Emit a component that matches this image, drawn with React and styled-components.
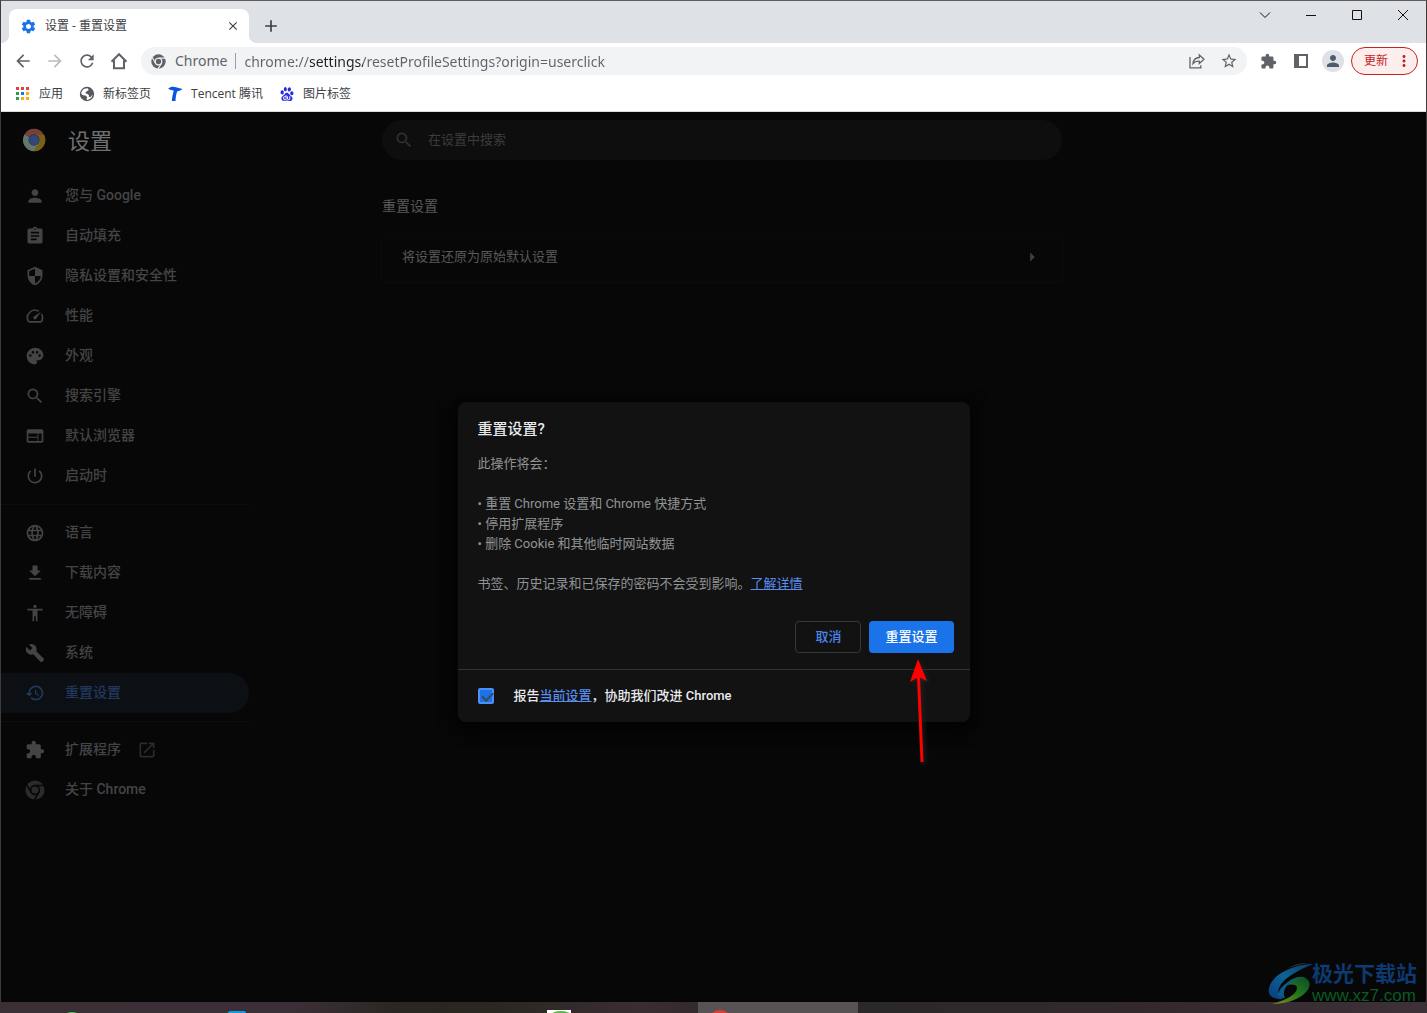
import React, { useState } from 'react'
import styled, { createGlobalStyle, css } from 'styled-components'
import {
  MdPerson, MdAssignment, MdSecurity, MdSpeed, MdPalette, MdSearch, MdWeb,
  MdPowerSettingsNew, MdLanguage, MdFileDownload, MdAccessibility, MdBuild,
  MdRestore, MdExtension, MdLaunch, MdSettings, MdClose, MdAdd, MdArrowBack,
  MdArrowForward, MdRefresh, MdStarBorder, MdMoreVert, MdArrowRight,
} from 'react-icons/md'
import { SiBaidu } from 'react-icons/si'

const uiFont = '"Open Sans", "Noto Sans CJK SC", sans-serif'
const pageFont = 'Roboto, "Noto Sans CJK SC", sans-serif'

const ChromeMark = ({ size = 16, gap = '#f1f3f4' }) => (
  <svg width={size} height={size} viewBox="0 0 24 24" aria-hidden="true">
    <circle cx="12" cy="12" r="11.5" fill="currentColor" />
    <circle cx="12" cy="12" r="6.2" fill={gap} />
    <circle cx="12" cy="12" r="4.3" fill="currentColor" />
    <path d="M12 6.6h11M7.3 14.7 1.8 5.2M16.7 14.7l-5.5 9.4" stroke={gap} strokeWidth="1.8" fill="none" />
  </svg>
)

const ChromeLogo = () => (
  <svg width="24" height="24" viewBox="0 0 24 24" aria-hidden="true">
    <path d="M12 12 2.4 6.4A11.2 11.2 0 0 1 21.8 6.4z" fill="#76403b" />
    <path d="M12 12 21.8 6.4A11.2 11.2 0 0 1 12 23.2z" fill="#796018" />
    <path d="M12 12v11.2A11.2 11.2 0 0 1 2.4 6.4z" fill="#62786a" />
    <path d="M7.4 14.8 2.4 6.4l5.3 3zM16.4 15l-4.4 8.2-2-6z" fill="#62786a" />
    <path d="M12 6.8h10A11.2 11.2 0 0 1 12 23.2l4.5-8.4z" fill="#796018" />
    <circle cx="12" cy="12" r="5.4" fill="#0a0a0a" />
    <circle cx="12" cy="12" r="5.2" fill="#304878" />
  </svg>
)

const HomeIcon = () => (
  <svg width="18" height="18" viewBox="0 0 18 18" fill="none" stroke="currentColor" strokeWidth="2" aria-hidden="true">
    <path d="M1.5 9.8 9 2.2l7.5 7.6M4 8.2v8h10v-8" />
  </svg>
)

const ShareIcon = () => (
  <svg width="16" height="16" viewBox="0 0 16 16" fill="none" stroke="currentColor" strokeWidth="1.3" aria-hidden="true">
    <path d="M1 4v10.8h10.8v-2.6M4 10.5c.5-4 2.8-5.8 6.3-6V2L15 6.3l-4.7 4.2V8.2C7.5 8 5.7 8.6 4 10.5z" />
  </svg>
)

const PanelIcon = () => (
  <svg width="14" height="14" viewBox="0 0 14 14" aria-hidden="true">
    <path fill="currentColor" fillRule="evenodd" d="M0 0h14v14H0zM5 2v10h7V2z" />
  </svg>
)

const AppsIcon = () => (
  <svg width="16" height="16" viewBox="0 0 16 16" aria-hidden="true">
    <path fill="#ea3f34" d="M1 1h3v3H1zM6 1h3v3H6zM11 1h3v3h-3z" />
    <path fill="#279c52" d="M1 6h3v3H1zM1 11h3v3H1z" />
    <path fill="#1a73e8" d="M6 6h3v3H6z" />
    <path fill="#fbae09" d="M11 6h3v3h-3zM11 11h3v3h-3zM6 11h3v3H6z" />
  </svg>
)

const GlobeIcon = () => (
  <svg width="16" height="16" viewBox="0 0 16 16" aria-hidden="true">
    <circle cx="8" cy="8" r="7.2" fill="#55585c" />
    <path fill="#fff" d="M2.2 7.8C2.4 5.4 3.6 3.6 5.400 2.800L9 2.200 9.600 4.200 7.400 5.600 6.200 7.300 8.600 7.900 10 9.300 9.600 10.600 11.400 11.200 13.600 8.600C13.400 11.600 11 13.800 8.200 13.900L7.400 12.700 8.400 11.200 6.400 9.600 4 9.200z" />
  </svg>
)

const TencentIcon = () => (
  <svg width="16" height="16" viewBox="0 0 16 16" aria-hidden="true">
    <path fill="#0a55e0" d="M1.200 2.800C3.500.6 6.300.400 9 1.300l6.500 1.800c-1.300 1.300-3 2-5.200 2.100-1.100 2.600-1.600 5.600-1.800 9.800H4.900c.2-4 .9-7.300 1.900-10.200-2-.7-3.800-.9-5.600-2z" />
  </svg>
)

const SwirlLogo = () => (
  <svg width="46" height="42" viewBox="0 0 46 42" aria-hidden="true">
    <defs>
      <linearGradient id="swirlBlue" x1="1" y1="0" x2="0" y2="1">
        <stop offset="0" stopColor="#0b3f66" />
        <stop offset=".5" stopColor="#0e6296" />
        <stop offset="1" stopColor="#0b3b7a" />
      </linearGradient>
      <linearGradient id="swirlGreen" x1="1" y1="0" x2="0" y2="1">
        <stop offset="0" stopColor="#0b4a26" />
        <stop offset=".5" stopColor="#257a1d" />
        <stop offset="1" stopColor="#8a8420" />
      </linearGradient>
    </defs>
    <path fill="url(#swirlBlue)" d="M45 1C30 1 5 9 1 25c-2 8 5 12 14 11-6-4-6-10-1-16C21 12 33 6 45 1z" />
    <path fill="url(#swirlGreen)" d="M36 14c8 4 7 11 0 17-8 7-21 10-32 10 14-4 26-10 25-17-1-3-6-3-12-2 5-6 12-9 19-8z" />
    <path fill="#0c5a8c" d="M10 31c3-9 12-15 25-17-8 3-14 6-17 10-2 3-3 7-1 11-4 0-7-1-7-4z" />
    <path fill="#3c302a" d="M20 5C27 1 34 0 40 0 33 1 27 3 20 5z" />
  </svg>
)

const navGroups = [
  [
    { label: '您与 Google', Icon: MdPerson },
    { label: '自动填充', Icon: MdAssignment },
    { label: '隐私设置和安全性', Icon: MdSecurity },
    { label: '性能', Icon: MdSpeed },
    { label: '外观', Icon: MdPalette },
    { label: '搜索引擎', Icon: MdSearch },
    { label: '默认浏览器', Icon: MdWeb },
    { label: '启动时', Icon: MdPowerSettingsNew },
  ],
  [
    { label: '语言', Icon: MdLanguage },
    { label: '下载内容', Icon: MdFileDownload },
    { label: '无障碍', Icon: MdAccessibility },
    { label: '系统', Icon: MdBuild },
    { label: '重置设置', Icon: MdRestore, active: true },
  ],
  [
    { label: '扩展程序', Icon: MdExtension, external: true },
    { label: '关于 Chrome', Icon: () => <ChromeMark size={20} gap="#070707" />, dim: true },
  ],
]

const App = () => {
  const [url, setUrl] = useState('chrome://settings/resetProfileSettings?origin=userclick')
  const [search, setSearch] = useState('')
  const [report, setReport] = useState(true)

  return (
    <>
      <GlobalStyle />
      <Desktop>
        <Window>
          <TabStrip>
            <Tab>
              <MdSettings size={17} color="#1a73e8" />
              <TabTitle>设置 - 重置设置</TabTitle>
              <TabButton aria-label="关闭标签页"><MdClose size={14} /></TabButton>
            </Tab>
            <NewTab aria-label="新标签页"><MdAdd size={20} /></NewTab>
            <WindowControls>
              <WindowButton aria-label="搜索标签页"><svg width="12" height="12" viewBox="0 0 12 12"><path d="M1 3.5 6 8.5l5-5" /></svg></WindowButton>
              <WindowButton aria-label="最小化"><svg width="12" height="12" viewBox="0 0 12 12"><path d="M1 6.5h10" /></svg></WindowButton>
              <WindowButton aria-label="最大化"><svg width="12" height="12" viewBox="0 0 12 12"><path d="M1.5 1.5h9v9h-9z" /></svg></WindowButton>
              <WindowButton aria-label="关闭"><svg width="12" height="12" viewBox="0 0 12 12"><path d="m1 1 10 10M11 1 1 11" /></svg></WindowButton>
            </WindowControls>
          </TabStrip>

          <Toolbar>
            <ToolButton aria-label="后退"><MdArrowBack size={20} /></ToolButton>
            <ToolButton aria-label="前进" $faded><MdArrowForward size={20} /></ToolButton>
            <ToolButton aria-label="重新加载"><MdRefresh size={20} /></ToolButton>
            <ToolButton aria-label="主页"><HomeIcon /></ToolButton>
            <Omnibox>
              <ChromeMark size={15} />
              <SiteName>Chrome</SiteName>
              <UrlInput aria-label="地址栏" value={url} onChange={(e) => setUrl(e.target.value)} />
              <ToolButton aria-label="分享"><ShareIcon /></ToolButton>
              <ToolButton aria-label="加入书签"><MdStarBorder size={18} /></ToolButton>
            </Omnibox>
            <ToolButton aria-label="扩展程序"><MdExtension size={17} /></ToolButton>
            <ToolButton aria-label="侧边栏"><PanelIcon /></ToolButton>
            <ToolButton aria-label="个人资料"><Avatar><MdPerson size={18} /></Avatar></ToolButton>
            <UpdateButton>更新<MdMoreVert size={18} /></UpdateButton>
          </Toolbar>

          <BookmarkBar>
            <Bookmark href="#apps"><AppsIcon />应用</Bookmark>
            <Bookmark href="#newtab"><GlobeIcon />新标签页</Bookmark>
            <Bookmark href="#tencent"><TencentIcon />Tencent 腾讯</Bookmark>
            <Bookmark href="#pictures"><SiBaidu size={14} color="#2a2ae0" />图片标签</Bookmark>
          </BookmarkBar>

          <Page>
            <Sidebar>
              <Brand>
                <ChromeLogo />
                <BrandTitle>设置</BrandTitle>
              </Brand>
              {navGroups.map((group, i) => (
                <NavGroup key={i}>
                  {group.map(({ label, Icon, active, external, dim }) => (
                    <NavLink key={label} href="#" $active={active} $dim={dim}>
                      <Icon size={20} />
                      <span>{label}</span>
                      {external && <MdLaunch className="external" size={20} />}
                    </NavLink>
                  ))}
                </NavGroup>
              ))}
            </Sidebar>

            <Main>
              <SearchField>
                <MdSearch size={20} />
                <input
                  type="text"
                  aria-label="在设置中搜索"
                  placeholder="在设置中搜索"
                  value={search}
                  onChange={(e) => setSearch(e.target.value)}
                />
              </SearchField>
              <SectionTitle>重置设置</SectionTitle>
              <CardRow>
                将设置还原为原始默认设置
                <MdArrowRight size={22} />
              </CardRow>
            </Main>

            <Backdrop>
              <Dialog role="dialog" aria-labelledby="reset-title">
                <DialogBody>
                  <DialogTitle id="reset-title">重置设置?</DialogTitle>
                  <p>此操作将会：</p>
                  <ul>
                    <li>重置 Chrome 设置和 Chrome 快捷方式</li>
                    <li>停用扩展程序</li>
                    <li>删除 Cookie 和其他临时网站数据</li>
                  </ul>
                  <p>书签、历史记录和已保存的密码不会受到影响。<Link href="#more">了解详情</Link></p>
                </DialogBody>
                <Actions>
                  <Button>取消</Button>
                  <Button $primary>重置设置</Button>
                </Actions>
                <DialogFooter>
                  <Checkbox id="report" type="checkbox" checked={report} onChange={(e) => setReport(e.target.checked)} />
                  <label htmlFor="report">报告<Link href="#current">当前设置</Link>，协助我们改进 Chrome</label>
                </DialogFooter>
                <Pointer viewBox="0 0 24 108" aria-hidden="true">
                  <path d="m12.500 18 3.500 85" stroke="#f00" strokeWidth="3" />
                  <path d="M12 0 4 23l8.500-5 8.500 4z" fill="#f00" />
                </Pointer>
              </Dialog>
            </Backdrop>
          </Page>
        </Window>

        <Taskbar>
          <TaskItem><svg width="24" height="3" viewBox="0 0 24 3"><ellipse cx="8" cy="5" rx="7" ry="3" fill="#45c552" /></svg></TaskItem>
          <TaskItem><svg width="24" height="3" viewBox="0 0 24 3"><rect x="3" y="1" width="18" height="9" rx="2" fill="#0b9ee6" /></svg></TaskItem>
          <TaskItem />
          <TaskItem><svg width="24" height="3" viewBox="0 0 24 3"><path fill="#fff" d="M0 0h24v3H0z" /><ellipse cx="14" cy="5" rx="10" ry="4" fill="#5bb848" /></svg></TaskItem>
          <TaskItem $active><svg width="24" height="3" viewBox="0 0 24 3"><circle cx="12" cy="12" r="12" fill="#e63b2e" /></svg></TaskItem>
        </Taskbar>

        <Watermark>
          <SwirlLogo />
          <div>
            <strong>极光下载站</strong>
            <span>www.xz7.com</span>
          </div>
        </Watermark>
      </Desktop>
    </>
  )
}

export default App

const GlobalStyle = createGlobalStyle`
  * {
    box-sizing: border-box;
  }

  body {
    margin: 0;
    background: #070707;
  }

  button, input {
    margin: 0;
    padding: 0;
    border: 0;
    background: none;
    font: inherit;
    color: inherit;
    outline: none;
  }

  h1, h2, p, ul {
    margin: 0;
    padding: 0;
    font-weight: 400;
  }

  svg {
    display: block;
    flex: none;
  }
`;

const Desktop = styled.div`
  position: relative;
  display: flex;
  flex-direction: column;
  min-height: 100vh;
  font: 12px/16px ${uiFont};
`;

const Window = styled.div`
  flex: 1;
  display: flex;
  flex-direction: column;
  border: 1px solid #43383b;
  border-top-color: #5f5b5e;
  border-bottom: 0;
`;

const TabStrip = styled.div`
  display: flex;
  height: 42px;
  padding: 8px 0 0 8px;
  background: #dee1e6;
`;

const Tab = styled.div`
  position: relative;
  display: flex;
  align-items: center;
  gap: 8px;
  width: 240px;
  padding: 0 9px 0 11px;
  border-radius: 8px 8px 0 0;
  background: #fff;
  color: #3c4043;

  &::before,
  &::after {
    content: '';
    position: absolute;
    bottom: 0;
    width: 8px;
    height: 8px;
  }

  &::before {
    left: -8px;
    background: radial-gradient(circle at 0 0, transparent 8px, #fff 8px);
  }

  &::after {
    right: -8px;
    background: radial-gradient(circle at 100% 0, transparent 8px, #fff 8px);
  }
`;

const TabTitle = styled.span`
  flex: 1;
`;

const TabButton = styled.button`
  display: grid;
  place-items: center;
  width: 14px;
  height: 16px;
`;

const NewTab = styled.button`
  display: grid;
  place-items: center;
  width: 28px;
  margin-left: 8px;
  color: #3c4043;
`;

const WindowControls = styled.div`
  display: flex;
  margin: -8px 0 0 auto;
`;

const WindowButton = styled.button`
  display: grid;
  place-items: center;
  width: 46px;
  height: 28px;

  svg {
    fill: none;
    stroke: #111;
  }
`;

const Toolbar = styled.div`
  display: flex;
  align-items: center;
  height: 36px;
  padding: 0 8px 0 6px;
  background: #fff;
`;

const ToolButton = styled.button`
  display: grid;
  place-items: center;
  flex: none;
  width: 32px;
  height: 28px;
  color: ${({ $faded }) => ($faded ? '#babcbe' : '#5f6368')};
`;

const Omnibox = styled.div`
  flex: 1;
  display: flex;
  align-items: center;
  height: 28px;
  margin: 0 6px;
  padding: 0 2px 0 10px;
  border-radius: 14px;
  background: #f1f3f4;
  color: #5f6368;
  font-family: "Noto Sans", "Noto Sans CJK SC", sans-serif;
  font-size: 14px;
`;

const SiteName = styled.span`
  margin-left: 9px;
  padding-right: 8px;
  border-right: 1px solid #9aa0a6;
`;

/* the host part of the address is darker than the rest */
const UrlInput = styled.input`
  flex: 1;
  min-width: 0;
  margin-left: 8px;
  height: 20px;
  background: linear-gradient(90deg, #5f6368 66px, #202124 66px 119px, #5f6368 119px);
  background-clip: text;
  -webkit-background-clip: text;
  -webkit-text-fill-color: transparent;
`;

const Avatar = styled.span`
  display: grid;
  place-items: center;
  width: 22px;
  height: 22px;
  border-radius: 50%;
  background: #dee1e6;
  color: #4e5a70;
`;

const UpdateButton = styled.button`
  display: flex;
  align-items: center;
  gap: 7px;
  height: 28px;
  margin-left: 2px;
  padding: 0 4px 0 12px;
  border: 1px solid #c5221f;
  border-radius: 14px;
  background: #fceeed;
  color: #c5221f;
`;

const BookmarkBar = styled.nav`
  display: flex;
  align-items: center;
  gap: 16px;
  height: 33px;
  padding: 0 14px 3px;
  border-bottom: 1px solid #dcdcdc;
  background: #fff;
`;

const Bookmark = styled.a`
  display: flex;
  align-items: center;
  gap: 8px;
  color: #3c4043;
  text-decoration: none;

  svg {
    width: 16px;
  }
`;

const Page = styled.div`
  position: relative;
  flex: 1;
  display: grid;
  grid-template-columns: minmax(266px, 381fr) minmax(0, 680px) minmax(0, 364fr);
  background: #070707;
  font: 13px/20px ${pageFont};
`;

const Sidebar = styled.nav`
  width: 248px;
`;

const Brand = styled.div`
  display: flex;
  align-items: center;
  gap: 22px;
  height: 56px;
  padding-left: 21px;
`;

const BrandTitle = styled.h1`
  padding-top: 4px;
  color: #6f7072;
  font-size: 22px;
  line-height: 32px;
`;

const NavGroup = styled.div`
  padding: 8px 0;

  & + & {
    border-top: 1px solid #0d0d0d;
  }
`;

const NavLink = styled.a`
  display: flex;
  align-items: center;
  gap: 20px;
  height: 40px;
  padding-left: 24px;
  border-radius: 0 20px 20px 0;
  color: #434446;
  font-size: 14px;
  font-weight: 500;
  text-decoration: none;

  span {
    padding-bottom: 2px;
  }

  .external {
    margin-left: -4px;
    color: #2a2b2c;
  }

  ${({ $dim }) => $dim && css`
    svg {
      color: #2a2b2c;
    }
  `}

  ${({ $active }) => $active && css`
    background: #0c1014;
    color: #22385c;
  `}
`;

const Main = styled.main`
  padding-top: 8px;
`;

const SearchField = styled.div`
  display: flex;
  align-items: center;
  gap: 14px;
  height: 40px;
  padding: 0 12px;
  border-radius: 20px;
  background: #0e0e0e;
  color: #303132;

  input {
    flex: 1;
  }

  input::placeholder {
    color: #3b3c3e;
  }
`;

const SectionTitle = styled.h2`
  margin: 36px 0 17px;
  color: #58595b;
  font-size: 14px;
`;

const CardRow = styled.button`
  display: flex;
  align-items: center;
  justify-content: space-between;
  width: 100%;
  height: 48px;
  padding: 0 19px 0 20px;
  border-radius: 4px;
  box-shadow: 0 1px 3px 1px #0c0c0c;
  color: #58595b;

  svg {
    color: #3f4042;
  }
`;

const Backdrop = styled.div`
  position: absolute;
  inset: 0;
  display: grid;
  place-items: center;
  padding-top: 10px;
`;

const Dialog = styled.section`
  position: relative;
  width: 512px;
  border-radius: 8px;
  background: #121212;
  box-shadow: 0 4px 16px 4px #030303;
`;

const DialogBody = styled.div`
  padding: 17px 20px 0;
  color: #919395;

  ul {
    margin: 20px 0;
    list-style: none;
  }

  li::before {
    content: '• ';
  }
`;

const DialogTitle = styled.h2`
  margin-bottom: 15px;
  color: #e8eaed;
  font-size: 15px;
  font-weight: 500;
`;

const Link = styled.a`
  color: #5a8df0;
  text-decoration: underline;
`;

const Actions = styled.div`
  display: flex;
  justify-content: flex-end;
  gap: 8px;
  padding: 27px 16px 16px;
`;

const Button = styled.button`
  height: 32px;
  padding: 0 ${({ $primary }) => ($primary ? 16 : 19)}px;
  border: ${({ $primary }) => ($primary ? '0' : '1px solid #37383a')};
  border-radius: 4px;
  background: ${({ $primary }) => ($primary ? '#1a73e8' : 'transparent')};
  color: ${({ $primary }) => ($primary ? '#fff' : '#4d86ee')};
  font-weight: 500;
`;

const DialogFooter = styled.div`
  display: flex;
  align-items: center;
  gap: 20px;
  height: 53px;
  padding: 0 20px;
  border-top: 1px solid #333436;
  color: #e8eaed;
  font-weight: 500;
`;

const Checkbox = styled.input`
  appearance: none;
  position: relative;
  width: 16px;
  height: 16px;
  border: 2px solid #4d8ef7;
  border-radius: 2px;

  &:checked {
    background: #1a73e8;
  }

  &:checked::after {
    content: '';
    position: absolute;
    left: 4px;
    top: 0;
    width: 5px;
    height: 9px;
    border: solid #3e4854;
    border-width: 0 2px 2px 0;
    transform: rotate(45deg);
  }
`;

const Pointer = styled.svg`
  position: absolute;
  top: 257px;
  right: 40px;
  width: 24px;
  height: 108px;
  filter: drop-shadow(2px 2px 2px #222);
  pointer-events: none;
`;

const Taskbar = styled.div`
  display: flex;
  gap: 1px;
  height: 11px;
  padding-left: 54px;
  background: linear-gradient(90deg, #3a2f35, #3c3038 20%, #2a2622 28%, #292720 34%, #3a2d33 45%, #2d2827 52%, #2b2829 62%, #33292d 80%, #3d3137);
  overflow: hidden;
`;

const TaskItem = styled.div`
  display: flex;
  align-items: flex-end;
  width: 160px;
  padding-left: 10px;
  background: ${({ $active }) => ($active ? '#575254' : 'transparent')};
`;

const Watermark = styled.div`
  position: absolute;
  right: 10px;
  bottom: 7px;
  display: flex;
  align-items: center;
  font-family: "Liberation Sans", "Noto Sans CJK SC", sans-serif;

  div {
    display: flex;
    flex-direction: column;
    margin-left: -2px;
  }

  strong {
    color: #0d3a70;
    font-size: 21px;
    line-height: 24px;
  }

  span {
    color: #0b5a24;
    font-size: 17px;
    line-height: 20px;
  }
`;
